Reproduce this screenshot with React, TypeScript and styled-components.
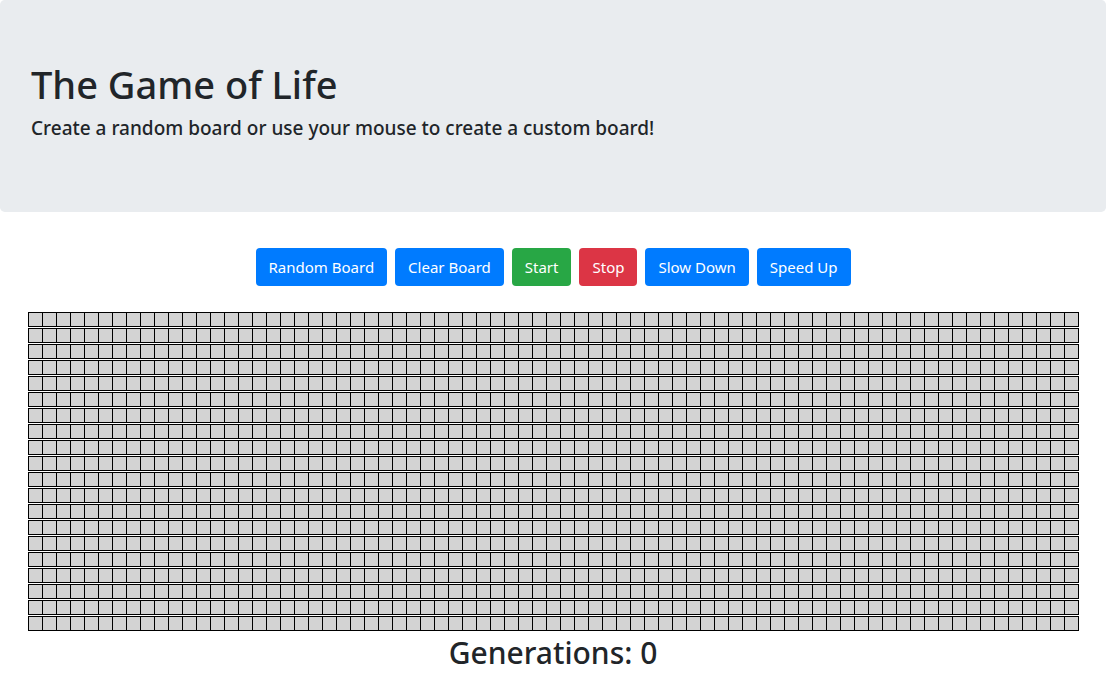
import React from "react";
import styled, { createGlobalStyle } from "styled-components";

const GlobalStyle = createGlobalStyle`
  * { box-sizing: border-box; }
  body {
    margin: 0;
    background: #ffffff;
    color: #212529;
    font-family: "Noto Sans", "Open Sans", sans-serif;
  }
`;

const Page = styled.div`
  display: flex;
  flex-direction: column;
  align-items: center;
`;

const Jumbotron = styled.header`
  align-self: stretch;
  background: #e9ecef;
  border-radius: 4.8px;
  padding: 60px 31px 69px;
`;

const Title = styled.h1`
  margin: 0 0 5px;
  font-size: 38px;
  font-weight: 500;
  line-height: 48px;
  color: #212529;
`;

const Subtitle = styled.p`
  margin: 0;
  font-size: 19px;
  font-weight: 500;
  line-height: 30px;
  color: #212529;
`;

const Toolbar = styled.div`
  display: flex;
  gap: 8px;
  justify-content: center;
  margin-top: 36px;
`;

const Button = styled.button<{ $variant: "primary" | "success" | "danger" }>`
  height: 38px;
  padding: 0 12px;
  border: 1px solid transparent;
  border-radius: 4px;
  font-family: inherit;
  font-size: 15px;
  line-height: 24px;
  color: #fff;
  cursor: pointer;
  background: ${(p) =>
    p.$variant === "success" ? "#28a745" : p.$variant === "danger" ? "#dc3545" : "#007bff"};
`;

const Board = styled.div`
  margin-top: 26px;
  display: flex;
  flex-direction: column;
  gap: 1px;
`;

const Row = styled.div`
  display: flex;
  border-top: 1px solid #000;
  border-left: 1px solid #000;
`;

const Cell = styled.div<{ $alive?: boolean }>`
  width: 14px;
  height: 14px;
  background: ${(p) => (p.$alive ? "#000" : "#d3d3d3")};
  border-right: 1px solid #000;
  border-bottom: 1px solid #000;
`;

const Generations = styled.h2`
  margin: 3px 0 0;
  font-size: 30px;
  font-weight: 500;
  line-height: 38px;
  color: #212529;
`;

const ROWS = 20;
const COLS = 75;

export default function App() {
  const rows = Array.from({ length: ROWS });
  const cols = Array.from({ length: COLS });
  return (
    <Page>
      <GlobalStyle />
      <Jumbotron>
        <Title>The Game of Life</Title>
        <Subtitle>Create a random board or use your mouse to create a custom board!</Subtitle>
      </Jumbotron>
      <Toolbar>
        <Button $variant="primary">Random Board</Button>
        <Button $variant="primary">Clear Board</Button>
        <Button $variant="success">Start</Button>
        <Button $variant="danger">Stop</Button>
        <Button $variant="primary">Slow Down</Button>
        <Button $variant="primary">Speed Up</Button>
      </Toolbar>
      <Board>
        {rows.map((_, r) => (
          <Row key={r}>
            {cols.map((_, c) => (
              <Cell key={c} />
            ))}
          </Row>
        ))}
      </Board>
      <Generations>Generations: 0</Generations>
    </Page>
  );
}
